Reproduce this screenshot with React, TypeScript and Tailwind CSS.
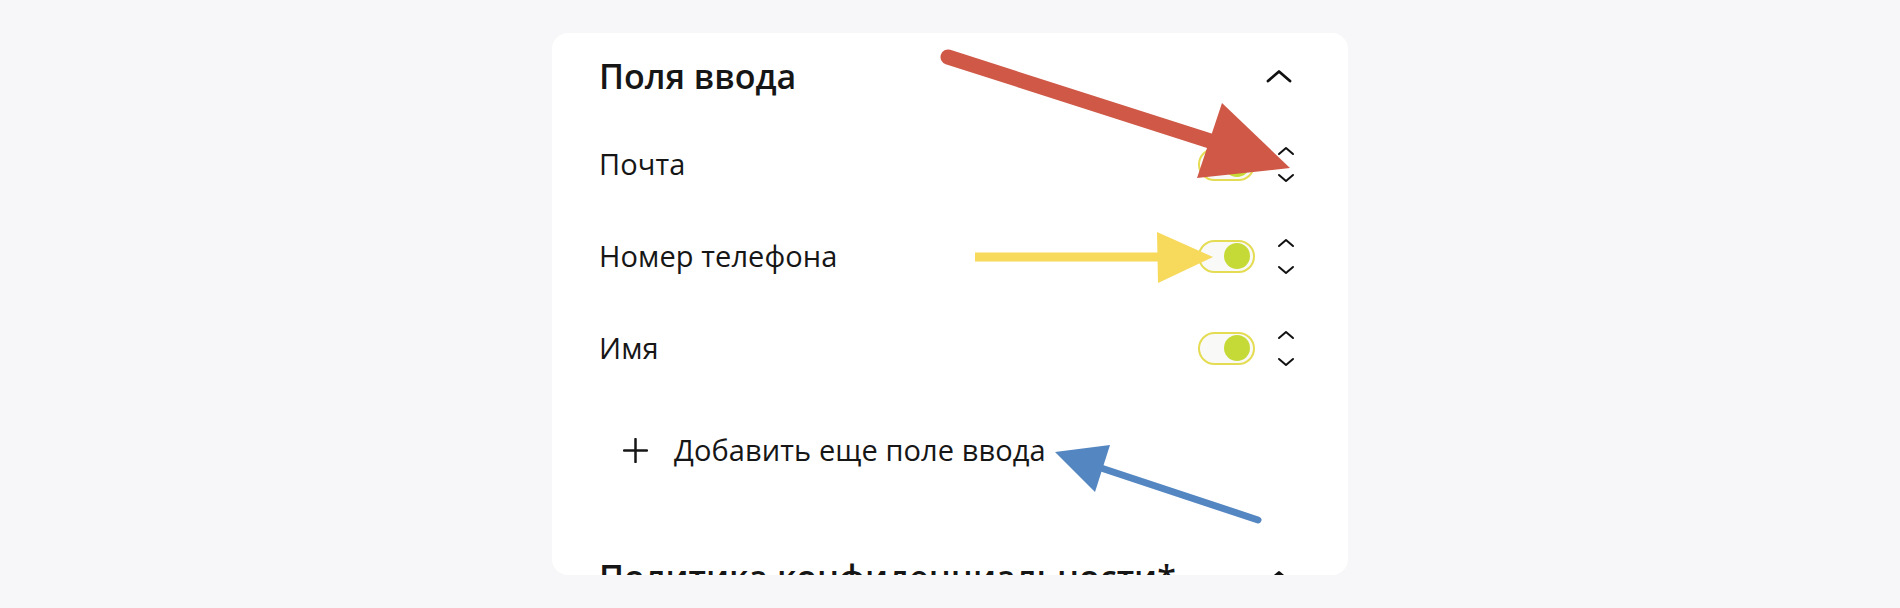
import React from 'react';

type Field = { id: string; label: string; enabled: boolean };

const fields: Field[] = [
  { id: 'email', label: 'Почта', enabled: true },
  { id: 'phone', label: 'Номер телефона', enabled: true },
  { id: 'name', label: 'Имя', enabled: true },
];

const SectionChevron = () => (
  <svg viewBox="0 0 26 14" className="w-[26px] h-[14px] text-[#111]" fill="none" stroke="currentColor" strokeWidth={2.8} strokeLinecap="round" strokeLinejoin="round">
    <polyline points="2,12 13,2.5 24,12" />
  </svg>
);

const SmallChevron = ({ down }: { down?: boolean }) => (
  <svg viewBox="0 0 18 10" className="w-[18px] h-[10px] text-[#111]" fill="none" stroke="currentColor" strokeWidth={2} strokeLinecap="round" strokeLinejoin="round">
    {down ? <polyline points="2,2 9,8 16,2" /> : <polyline points="2,8 9,2 16,8" />}
  </svg>
);

const Toggle = ({ on }: { on: boolean }) => (
  <div
    className={`w-[57px] h-[33px] rounded-full border-2 border-[#e4dc52] bg-[#f9f9f7] flex items-center px-[3px] ${
      on ? 'justify-end' : 'justify-start'
    }`}
  >
    <div className="w-[26px] h-[26px] rounded-full bg-[#c6da37]" />
  </div>
);

const FieldRow = ({ field }: { field: Field }) => (
  <div className="h-[92px] flex items-center justify-between">
    <span className="text-[29px] tracking-[0.1px] text-[#161616]">{field.label}</span>
    <div className="flex items-center gap-[22px]">
      <Toggle on={field.enabled} />
      <div className="flex flex-col items-center gap-[17px]">
        <SmallChevron />
        <SmallChevron down />
      </div>
    </div>
  </div>
);

const Annotations = () => (
  <svg className="absolute inset-0 pointer-events-none" width={1900} height={608} viewBox="0 0 1900 608">
    {/* red */}
    <line x1={948} y1={57} x2={1232} y2={148} stroke="#cf5847" strokeWidth={15} strokeLinecap="round" />
    <polygon points="1222,103 1290,168 1197,178" fill="#cf5847" />
    {/* yellow */}
    <line x1={975} y1={257} x2={1170} y2={257} stroke="#f7d95b" strokeWidth={9} />
    <polygon points="1157,232 1213,257 1158,283" fill="#f7d95b" />
    {/* blue */}
    <line x1={1092} y1={465} x2={1258} y2={520} stroke="#5486c1" strokeWidth={7} strokeLinecap="round" />
    <polygon points="1055,452 1110,445 1095,492" fill="#5486c1" />
  </svg>
);

export default function App() {
  return (
    <div className="relative w-full h-[608px] bg-[#f7f7f9] overflow-hidden" style={{ fontFamily: '"Open Sans", "Noto Sans", sans-serif' }}>
      <div className="mx-auto mt-[33px] w-[796px] h-[542px] bg-white rounded-2xl overflow-hidden pl-[47px] pr-[53px]">
        <div className="pt-[22px] h-[64px] flex items-center justify-between pr-[3px]">
          <h2 className="text-[34px] font-semibold text-[#161616] leading-none">Поля ввода</h2>
          <SectionChevron />
        </div>
        <div className="mt-[21px]">
          {fields.map((f) => (
            <FieldRow key={f.id} field={f} />
          ))}
        </div>
        <button className="h-[112px] flex items-center gap-[26px] pl-[24px] text-[29px] tracking-[0.1px] text-[#161616]">
          <svg viewBox="0 0 24 24" className="w-[25px] h-[25px]" fill="none" stroke="currentColor" strokeWidth={2.4} strokeLinecap="round">
            <line x1={12} y1={1} x2={12} y2={23} />
            <line x1={1} y1={12} x2={23} y2={12} />
          </svg>
          Добавить еще поле ввода
        </button>
        <div className="mt-[50px] h-[42px] flex items-center justify-between pr-[3px]">
          <h2 className="text-[34px] font-semibold text-[#161616] leading-none">Политика конфиденциальности*</h2>
          <SectionChevron />
        </div>
      </div>
      <Annotations />
    </div>
  );
}
